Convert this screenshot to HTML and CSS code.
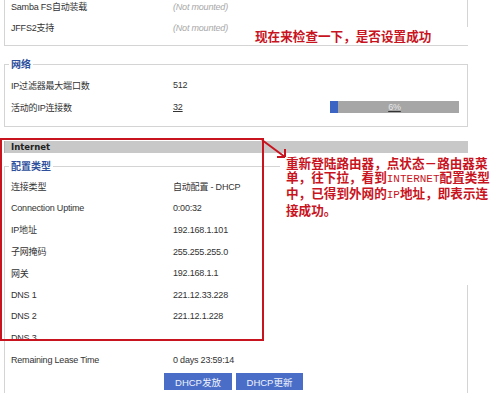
FILE: index.html
```html
<!DOCTYPE html>
<html lang="zh-CN">
<head>
    <meta charset="UTF-8">
    <meta name="viewport" content="width=device-width, initial-scale=1.0">
    <title>路由器状态</title>
    <link rel="stylesheet" href="styles.css">
</head>
<body>
    <div class="page">
        <!-- Storage -->
        <fieldset class="box box-top">
            <div class="row">
                <span>Samba FS自动装载</span>
                <span class="muted">(Not mounted)</span>
            </div>
            <div class="row">
                <span>JFFS2支持</span>
                <span class="muted">(Not mounted)</span>
            </div>
        </fieldset>

        <!-- Network -->
        <fieldset class="box box-net">
            <legend>网络</legend>
            <div class="row">
                <span>IP过滤器最大端口数</span>
                <span>512</span>
            </div>
            <div class="row">
                <span>活动的IP连接数</span>
                <span class="link">32</span>
                <div class="meter">
                    <div class="meter-fill" style="width: 6%"></div>
                    <span class="meter-text">6%</span>
                </div>
            </div>
        </fieldset>

        <!-- Internet -->
        <div class="section-head">Internet</div>
        <fieldset class="box box-wan">
            <legend>配置类型</legend>
            <div class="rows">
                <div class="row"><span>连接类型</span><span>自动配置 - DHCP</span></div>
                <div class="row"><span>Connection Uptime</span><span>0:00:32</span></div>
                <div class="row"><span>IP地址</span><span>192.168.1.101</span></div>
                <div class="row"><span>子网掩码</span><span>255.255.255.0</span></div>
                <div class="row"><span>网关</span><span>192.168.1.1</span></div>
                <div class="row"><span>DNS 1</span><span>221.12.33.228</span></div>
                <div class="row"><span>DNS 2</span><span>221.12.1.228</span></div>
                <div class="row"><span>DNS 3</span><span></span></div>
                <div class="row"><span>Remaining Lease Time</span><span>0 days 23:59:14</span></div>
            </div>
            <div class="actions">
                <button class="btn">DHCP发放</button>
                <button class="btn btn-narrow">DHCP更新</button>
            </div>
        </fieldset>

        <!-- Annotations -->
        <div class="note note-top">现在来检查一下，是否设置成功</div>
        <div class="mark-frame"></div>
        <div class="note note-side">
            重新登陆路由器，点状态－路由器菜<br>
            单，往下拉，看到<span class="mono">INTERNET</span>配置类型<br>
            中，已得到外网的<span class="mono">IP</span>地址，即表示连<br>
            接成功。
        </div>
        <svg class="arrow" width="40" height="30" viewBox="0 0 40 30">
            <path d="M7 8 L30 25 M30 25 L30 17 M30 25 L22 25" fill="none" stroke="#c8141e" stroke-width="2"/>
        </svg>
    </div>
</body>
</html>
```

FILE: styles.css
```css
body {
    margin: 0;
    padding: 0;
    background: #ffffff;
    font-family: "Liberation Sans", "Noto Sans CJK SC", sans-serif;
    font-size: 9px;
    color: #333333;
}

.page {
    position: relative;
    width: 495px;
    height: 393px;
    overflow: hidden;
    padding-left: 4px;
    box-sizing: border-box;
}

/* Fieldset boxes */
.box {
    box-sizing: border-box;
    width: 464px;
    margin: 0;
    padding: 0 0 0 6px;
    border: 1px solid #d4d4d4;
    min-inline-size: 0;
}

.box legend {
    padding: 0 2px;
    margin-left: -2px;
    font-size: 10px;
    line-height: 13px;
    font-weight: bold;
    color: #2d4f9c;
}

.box-top {
    border-top: none;
    margin-top: -4px;
    padding-bottom: 7px;
}

.box-net {
    margin-top: 12px;
    padding-top: 3px;
    padding-bottom: 8px;
}

.box-net .row {
    height: 22px;
}

.box-wan {
    margin-top: 7px;
    padding-top: 3px;
    padding-bottom: 20px;
}

/* Rows */
.row {
    display: grid;
    grid-template-columns: 162px 157px 129px;
    align-items: center;
    height: 21px;
    letter-spacing: -0.2px;
}

.rows .row {
    height: 21.6px;
}

.muted {
    color: #a8a8a8;
    font-style: italic;
}

.link {
    text-decoration: underline;
}

/* Usage meter */
.meter {
    position: relative;
    height: 12px;
    background: #a6a6a6;
}

.meter-fill {
    height: 100%;
    background: #3c64c2;
}

.meter-text {
    position: absolute;
    top: 0;
    left: 0;
    right: 0;
    line-height: 12px;
    text-align: center;
    color: #e6e6e6;
    text-decoration: underline;
    text-decoration-color: #333;
}

/* Internet header */
.section-head {
    box-sizing: border-box;
    width: 464px;
    height: 12px;
    margin-top: 14px;
    padding-left: 6px;
    background: #c8c8c8;
    border-left: 1px solid #b0b0b0;
    font-family: "DejaVu Sans", sans-serif;
    font-size: 8.5px;
    font-weight: bold;
    line-height: 12px;
    color: #222222;
}

/* Buttons */
.actions {
    display: flex;
    gap: 4px;
    margin-top: 3px;
    margin-left: 153px;
}

.btn {
    width: 68px;
    height: 17px;
    padding: 0;
    border: none;
    background: #4a6ec8;
    color: #eef2fb;
    font-family: "Liberation Sans", "Noto Sans CJK SC", sans-serif;
    font-size: 9.5px;
}

.btn-narrow {
    width: 67px;
}

/* Annotations */
.note {
    position: absolute;
    background: #ffffff;
    font-family: "Noto Sans CJK SC", sans-serif;
    font-size: 12.6px;
    font-weight: bold;
    color: #c8141e;
    white-space: nowrap;
}

.note-top {
    left: 250px;
    top: 27px;
    width: 220px;
    height: 18px;
    padding-left: 5px;
    line-height: 18px;
    box-sizing: border-box;
}

.note-side {
    left: 280px;
    top: 153px;
    width: 215px;
    height: 132px;
    padding: 3px 0 0 6px;
    box-sizing: border-box;
    line-height: 13.5px;
}

.mono {
    font-family: "Liberation Mono", monospace;
    font-weight: normal;
    font-size: 11px;
}

.mark-frame {
    position: absolute;
    left: 0;
    top: 138px;
    width: 260px;
    height: 199px;
    border: 2px solid #c8141e;
}

.arrow {
    position: absolute;
    left: 255px;
    top: 132px;
}
```
